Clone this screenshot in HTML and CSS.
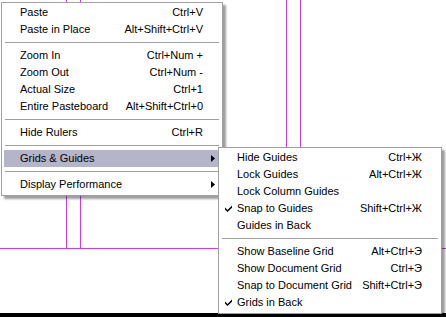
FILE: index.html
```html
<!DOCTYPE html>
<html>
	<head>
		<title>Grids &amp; Guides</title>
		<link rel="stylesheet" href="styles.css">
	</head>
	<body>
		<div id="canvas">
			<div class="guide guide_v guide_a"></div>
			<div class="guide guide_v guide_b"></div>
			<div class="guide guide_v guide_c"></div>
			<div class="guide guide_v guide_d"></div>
			<div class="guide guide_h"></div>
			<div id="page_edge"></div>
		</div>

		<div id="main_menu" class="menu">
			<div class="item"><span>Paste</span><span>Ctrl+V</span></div>
			<div class="item"><span>Paste in Place</span><span>Alt+Shift+Ctrl+V</span></div>
			<div class="sep"></div>
			<div class="item"><span>Zoom In</span><span>Ctrl+Num +</span></div>
			<div class="item"><span>Zoom Out</span><span>Ctrl+Num -</span></div>
			<div class="item"><span>Actual Size</span><span>Ctrl+1</span></div>
			<div class="item"><span>Entire Pasteboard</span><span>Alt+Shift+Ctrl+0</span></div>
			<div class="sep"></div>
			<div class="item"><span>Hide Rulers</span><span>Ctrl+R</span></div>
			<div class="sep"></div>
			<div class="item active"><span>Grids &amp; Guides</span>
				<svg class="arrow" width="4" height="7" viewBox="0 0 4 7"><polygon points="0,0 4,3.5 0,7" fill="#000"/></svg>
			</div>
			<div class="sep"></div>
			<div class="item"><span>Display Performance</span>
				<svg class="arrow" width="4" height="7" viewBox="0 0 4 7"><polygon points="0,0 4,3.5 0,7" fill="#000"/></svg>
			</div>
		</div>

		<div id="sub_menu" class="menu">
			<div class="item"><span>Hide Guides</span><span>Ctrl+Ж</span></div>
			<div class="item"><span>Lock Guides</span><span>Alt+Ctrl+Ж</span></div>
			<div class="item"><span>Lock Column Guides</span><span></span></div>
			<div class="item">
				<svg class="check" width="7" height="7" viewBox="0 0 7 7"><path d="M0 2.5 L2.5 5 L7 0.5 L7 2.8 L2.5 7 L0 4.6 Z" fill="#000"/></svg>
				<span>Snap to Guides</span><span>Shift+Ctrl+Ж</span>
			</div>
			<div class="item"><span>Guides in Back</span><span></span></div>
			<div class="sep"></div>
			<div class="item"><span>Show Baseline Grid</span><span>Alt+Ctrl+Э</span></div>
			<div class="item"><span>Show Document Grid</span><span>Ctrl+Э</span></div>
			<div class="item"><span>Snap to Document Grid</span><span>Shift+Ctrl+Э</span></div>
			<div class="item">
				<svg class="check" width="7" height="7" viewBox="0 0 7 7"><path d="M0 2.5 L2.5 5 L7 0.5 L7 2.8 L2.5 7 L0 4.6 Z" fill="#000"/></svg>
				<span>Grids in Back</span><span></span>
			</div>
		</div>
	</body>
</html>
```

FILE: styles.css
```css
body
{
	margin:0;
	width:446px;
	height:317px;
	overflow:hidden;
	background:#fff;
	font-family:"Liberation Sans", Arial, sans-serif;
	font-size:11px;
	color:#000;
}
/*============ canvas ============*/
#canvas
{
	position:relative;
	width:446px;
	height:317px;
}
.guide
{
	position:absolute;
	background:#bf40f8;
}
.guide_v
{
	top:0;
	width:1px;
	height:249px;
}
.guide_a { left:66px; }
.guide_b { left:80px; }
.guide_c { left:286px; }
.guide_d { left:300px; }
.guide_h
{
	left:0;
	top:248px;
	width:446px;
	height:1px;
}
#page_edge
{
	position:absolute;
	left:0;
	top:313px;
	width:446px;
	height:4px;
	background:#000;
}
/*============ menus ============*/
.menu
{
	position:absolute;
	box-sizing:border-box;
	background:#fff;
	border:1px solid #a0a0a0;
	padding:1px 2px 2px 2px;
	display:flex;
	flex-direction:column;
	box-shadow:3px 3px 2px rgba(0,0,0,0.38);
}
#main_menu
{
	left:1px;
	top:2px;
	width:222px;
}
#sub_menu
{
	left:218px;
	top:147px;
	width:224px;
}
.item
{
	position:relative;
	height:17px;
	line-height:17px;
	padding:0 17px 0 16px;
	display:flex;
	justify-content:space-between;
	white-space:nowrap;
}
.item.active
{
	background:#b6b4c8;
}
.sep
{
	height:9px;
	display:flex;
	align-items:center;
	padding:0 1px;
}
.sep::before
{
	content:"";
	flex:1;
	height:1px;
	margin-top:-1px;
	background:#a0a0a0;
}
.arrow
{
	position:absolute;
	right:5px;
	top:5px;
}
.check
{
	position:absolute;
	left:4px;
	top:5px;
}
```
